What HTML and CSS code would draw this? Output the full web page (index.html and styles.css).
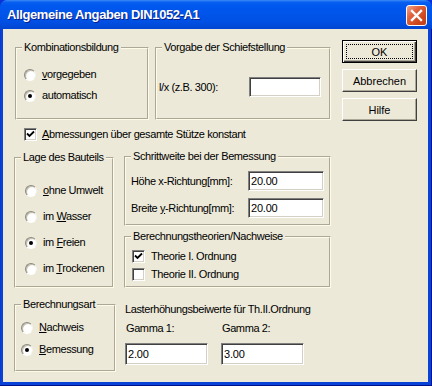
FILE: index.html
```html
<!DOCTYPE html>
<html>
	<head>
		<meta charset="utf-8">
		<link rel="stylesheet" href="styles.css">
	</head>
	<body>
		<div class="window">
			<div class="titlebar">
				<div class="title">Allgemeine Angaben DIN1052-A1</div>
				<div class="close">
					<svg width="13" height="13" viewBox="0 0 13 13"><path d="M2 2 L11 11 M11 2 L2 11" stroke="#fff" stroke-width="2.4" stroke-linecap="square"/></svg>
				</div>
			</div>
			<div class="frame">
				<div class="client">
					<div class="top-row">
						<fieldset class="group group-komb">
							<legend>Kombinationsbildung</legend>
							<div class="group-body">
								<div class="opt"><span class="radio"></span><span><u>v</u>orgegeben</span></div>
								<div class="opt"><span class="radio checked"></span><span>automatisch</span></div>
							</div>
						</fieldset>
						<fieldset class="group group-vorgabe">
							<legend>Vorgabe der Schiefstellung</legend>
							<div class="group-body">
								<div class="field">
									<span class="field-label label-lx">l/x (z.B. 300):</span>
									<input class="edit edit-lx" type="text" value="">
								</div>
							</div>
						</fieldset>
						<div class="buttons">
							<div class="button default"><span class="focus">OK</span></div>
							<div class="button">Abbrechen</div>
							<div class="button">Hilfe</div>
						</div>
					</div>
					<div class="opt check-row"><span class="check checked"><svg width="9" height="9" viewBox="0 0 9 9"><path d="M1 3.5 L3.5 6 L8 1.5" fill="none" stroke="#000" stroke-width="1.8"/></svg></span><span><u>A</u>bmessungen über gesamte Stütze konstant</span></div>
					<div class="main-row">
						<div class="left-col">
							<fieldset class="group group-lage">
								<legend>Lage des Bauteils</legend>
								<div class="group-body">
									<div class="opt"><span class="radio"></span><span><u>o</u>hne Umwelt</span></div>
									<div class="opt"><span class="radio"></span><span>im <u>W</u>asser</span></div>
									<div class="opt"><span class="radio checked"></span><span>im <u>F</u>reien</span></div>
									<div class="opt"><span class="radio"></span><span>im <u>T</u>rockenen</span></div>
								</div>
							</fieldset>
							<fieldset class="group group-art">
								<legend>Berechnungsart</legend>
								<div class="group-body">
									<div class="opt"><span class="radio"></span><span><u>N</u>achweis</span></div>
									<div class="opt"><span class="radio checked"></span><span><u>B</u>emessung</span></div>
								</div>
							</fieldset>
						</div>
						<div class="right-col">
							<fieldset class="group group-schritt">
								<legend>Schrittweite bei der Bemessung</legend>
								<div class="group-body">
									<div class="field">
										<span class="field-label label-mm">Höhe x-Richtung[mm]:</span>
										<input class="edit edit-mm" type="text" value="20.00">
									</div>
									<div class="field">
										<span class="field-label label-mm">Breite <u>y</u>-Richtung[mm]:</span>
										<input class="edit edit-mm" type="text" value="20.00">
									</div>
								</div>
							</fieldset>
							<fieldset class="group group-theorie">
								<legend>Berechnungstheorien/Nachweise</legend>
								<div class="group-body">
									<div class="opt"><span class="check checked"><svg width="9" height="9" viewBox="0 0 9 9"><path d="M1 3.5 L3.5 6 L8 1.5" fill="none" stroke="#000" stroke-width="1.8"/></svg></span><span>Theorie I. Ordnung</span></div>
									<div class="opt"><span class="check"></span><span>Theorie II. Ordnung</span></div>
								</div>
							</fieldset>
							<div class="gamma-title">Lasterhöhungsbeiwerte für Th.II.Ordnung</div>
							<div class="gamma-row">
								<div class="gamma-col">
									<div class="gamma-label">Gamma 1:</div>
									<input class="edit edit-gamma" type="text" value="2.00">
								</div>
								<div class="gamma-col">
									<div class="gamma-label">Gamma 2:</div>
									<input class="edit edit-gamma" type="text" value="3.00">
								</div>
							</div>
						</div>
					</div>
				</div>
			</div>
		</div>
	</body>
</html>
```
FILE: styles.css
```css
body
{
	margin: 0;
	font-family: "Liberation Sans", Arial, sans-serif;
	font-size: 11px;
	letter-spacing: -0.4px;
	color: #000;
}
.window
{
	display: flex;
	flex-direction: column;
	width: 432px;
	height: 386px;
	background: #0831d9;
}
.titlebar
{
	display: flex;
	align-items: center;
	height: 29px;
	padding: 0 5px 0 7px;
	box-sizing: border-box;
	border-radius: 7px 7px 0 0;
	background: linear-gradient(#3d8cf5 0, #0a61f0 2px, #0058ee 5px, #0055ea 45%, #0050e4 75%, #0045d0 100%);
}
.title
{
	flex: 1;
	color: #fff;
	font-weight: bold;
	font-size: 13px;
	letter-spacing: -0.4px;
	text-shadow: 1px 1px 0 #0a1e8a;
}
.close
{
	display: flex;
	align-items: center;
	justify-content: center;
	width: 19px;
	height: 19px;
	margin-top: 2px;
	border: 1px solid #fff;
	border-radius: 3px;
	background: linear-gradient(135deg, #eda58c 0, #e2633e 35%, #cc4419 75%, #c2401c 100%);
}
.frame
{
	flex: 1;
	display: flex;
	padding: 0 4px 4px 3px;
	background: #0842d6;
	box-shadow: inset -1px -1px 0 #00138c, inset 1px 0 0 #0a3ccf;
}
.client
{
	flex: 1;
	padding-top: 11px;
	background: #ece9d8;
}
.top-row
{
	display: flex;
	align-items: flex-start;
	margin-left: 12px;
}
.group
{
	margin: 0;
	padding: 0;
	min-width: 0;
	box-sizing: border-box;
	border: 2px groove #fffbe6;
}
.group legend
{
	margin-left: 5px;
	padding: 0 2px;
	line-height: 13px;
}
.group-body
{
	display: flex;
	flex-direction: column;
}
.group-komb
{
	width: 134px;
	height: 79px;
	margin-top: 1px;
}
.group-komb .group-body
{
	padding: 14px 0 0 7px;
	gap: 8px;
}
.group-vorgabe
{
	width: 176px;
	height: 79px;
	margin: 1px 0 0 6px;
}
.group-vorgabe .group-body
{
	padding: 23px 0 0 2px;
}
.buttons
{
	display: flex;
	flex-direction: column;
	gap: 6px;
	margin-left: 11px;
}
.button
{
	display: flex;
	align-items: center;
	justify-content: center;
	width: 75px;
	height: 23px;
	box-sizing: border-box;
	border: 1px solid;
	border-color: #fff #404040 #404040 #fff;
	box-shadow: inset -1px -1px 0 #aca899;
	background: #ece9d8;
	letter-spacing: 0;
}
.button.default
{
	border: 1px solid #000;
	box-shadow: inset 1px 1px 0 #fff, inset -1px -1px 0 #404040, inset -2px -2px 0 #aca899;
	padding: 3px;
}
.focus
{
	display: flex;
	align-items: center;
	justify-content: center;
	width: 100%;
	height: 100%;
	border: 1px dotted #000;
	box-sizing: border-box;
}
.opt
{
	display: flex;
	align-items: center;
	gap: 6px;
	height: 13px;
	line-height: 13px;
	white-space: nowrap;
}
.radio
{
	position: relative;
	flex: none;
	width: 12px;
	height: 12px;
	box-sizing: border-box;
	border-radius: 50%;
	border: 1px solid;
	border-color: #8d8a7e #f4f3ee #ffffff #8d8a7e;
	background: radial-gradient(circle at 60% 60%, #fff 0, #fff 45%, #dcd9cc 100%);
	box-shadow: inset 1px 1px 0 #c2bfb1;
}
.radio.checked::after
{
	content: "";
	position: absolute;
	left: 3px;
	top: 3px;
	width: 4px;
	height: 4px;
	border-radius: 50%;
	background: #000;
}
.check
{
	display: flex;
	align-items: center;
	justify-content: center;
	flex: none;
	width: 13px;
	height: 13px;
	box-sizing: border-box;
	border: 1px solid;
	border-color: #808080 #fff #fff #808080;
	box-shadow: inset 1px 1px 0 #404040, inset -1px -1px 0 #d4d0c8;
	background: #fff;
}
.check-row
{
	margin: 7px 0 0 21px;
	gap: 5px;
}
.field
{
	display: flex;
	align-items: center;
}
.field-label
{
	flex: none;
	white-space: nowrap;
}
.label-lx
{
	width: 90px;
}
.label-mm
{
	width: 117px;
}
.edit
{
	margin: 0;
	padding: 0 2px;
	box-sizing: border-box;
	border: 1px solid;
	border-color: #808080 #fff #fff #808080;
	box-shadow: inset 1px 1px 0 #404040, inset -1px -1px 0 #d4d0c8;
	background: #fff;
	font-family: "Liberation Sans", Arial, sans-serif;
	font-size: 11px;
	letter-spacing: -0.2px;
	color: #000;
	outline: none;
}
.edit-lx
{
	width: 72px;
	height: 20px;
}
.edit-mm
{
	width: 76px;
	height: 20px;
}
.edit-gamma
{
	width: 83px;
	height: 22px;
	margin-top: 8px;
}
.main-row
{
	display: flex;
	align-items: flex-start;
	margin: 9px 0 0 11px;
}
.left-col
{
	display: flex;
	flex-direction: column;
	width: 102px;
}
.group-lage
{
	width: 100px;
	height: 137px;
	margin-top: 1px;
}
.group-lage .group-body
{
	padding: 20px 0 0 9px;
	gap: 13px;
}
.group-art
{
	width: 102px;
	height: 74px;
	margin-top: 10px;
}
.group-art .group-body
{
	padding: 10px 0 0 5px;
	gap: 9px;
}
.right-col
{
	display: flex;
	flex-direction: column;
	width: 207px;
	margin-left: 8px;
}
.group-schritt
{
	height: 76px;
}
.group-schritt .group-body
{
	padding: 8px 0 0 5px;
	gap: 7px;
}
.group-theorie
{
	height: 58px;
	margin-top: 4px;
}
.group-theorie .group-body
{
	padding: 7px 0 0 6px;
	gap: 5px;
}
.gamma-title
{
	margin: 15px 0 0 1px;
	line-height: 13px;
}
.gamma-row
{
	display: flex;
	margin: 6px 0 0 1px;
}
.gamma-col
{
	display: flex;
	flex-direction: column;
	width: 96px;
}
.gamma-label
{
	line-height: 13px;
	padding-left: 1px;
}
```
